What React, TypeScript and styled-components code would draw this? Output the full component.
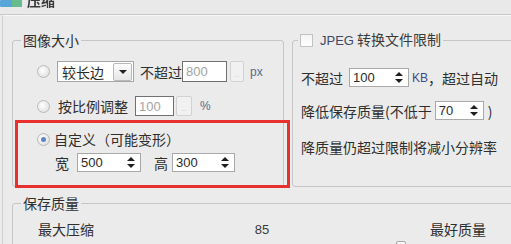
import React from "react";
import styled, { createGlobalStyle } from "styled-components";

const Global = createGlobalStyle`
  html, body { margin: 0; padding: 0; background: #ebebeb; overflow: hidden; }
  body { font-family: "Noto Sans CJK SC", "Liberation Sans", sans-serif; color: #2e2e2e; }
  * { box-sizing: border-box; }
`;

const Window = styled.div`
  width: 511px;
  height: 244px;
  overflow: hidden;
  background: #ebebeb;
`;

const TitleBar = styled.div`
  height: 15px;
  display: flex;
  align-items: flex-start;
  gap: 5px;
  border-bottom: 1px solid #c9c9c9;
  overflow: hidden;
  background: #e9e9e9;
`;

const TitleText = styled.span`
  font-size: 14px;
  line-height: 14px;
  margin-top: -7px;
  color: #3a3a3a;
  font-weight: bold;
  filter: blur(0.6px);
`;

const Panel = styled.div`
  margin-left: 2px;
  border-left: 1px solid #d0d0d0;
  border-top: 1px solid #f7f7f7;
  padding: 16px 0 0 9px;
  height: 229px;
`;

const TopRow = styled.div`
  display: flex;
  gap: 8px;
  width: 520px;
`;

const Group = styled.fieldset<{ $w: number; $h?: number }>`
  margin: 0;
  padding: 0;
  width: ${(p) => p.$w}px;
  height: ${(p) => (p.$h ? `${p.$h}px` : "auto")};
  border: 1px solid #c6c6c6;
  border-radius: 3px;
  min-inline-size: 0;
  flex-shrink: 0;
`;

const Legend = styled.legend<{ $ml: number }>`
  margin-left: ${(p) => p.$ml}px;
  padding: 0 2px;
  font-size: 14px;
  line-height: 16px;
  height: 16px;
  display: flex;
  align-items: center;
  gap: 8px;
  color: #2e2e2e;
`;

const LeftBody = styled.div`
  padding-top: 13px;
  display: flex;
  flex-direction: column;
`;

const Row = styled.div<{ $gap?: number; $mt?: number; $pl?: number }>`
  display: flex;
  align-items: center;
  gap: ${(p) => p.$gap ?? 0}px;
  margin-top: ${(p) => p.$mt ?? 0}px;
  padding-left: ${(p) => p.$pl ?? 0}px;
  white-space: nowrap;
`;

const Label = styled.span<{ $ml?: number; $mr?: number; $c?: string }>`
  font-size: 14px;
  line-height: 16px;
  margin-left: ${(p) => p.$ml ?? 0}px;
  margin-right: ${(p) => p.$mr ?? 0}px;
  color: ${(p) => p.$c ?? "#2e2e2e"};
`;

const Unit = styled.span<{ $ml?: number; $c?: string }>`
  font-family: "Liberation Sans", sans-serif;
  font-size: 12px;
  margin-left: ${(p) => p.$ml ?? 0}px;
  color: ${(p) => p.$c ?? "#5a6a8a"};
`;

const Radio = styled.span<{ $on?: boolean }>`
  width: 13px;
  height: 13px;
  border-radius: 50%;
  border: 1px solid #b9b9b9;
  background: radial-gradient(circle at 40% 40%, #ffffff 0%, #e4e4e4 70%);
  display: flex;
  align-items: center;
  justify-content: center;
  flex-shrink: 0;
  &::after {
    content: "";
    width: 5px;
    height: 5px;
    border-radius: 50%;
    background: ${(p) => (p.$on ? "#5b86c6" : "transparent")};
  }
`;

const Check = styled.span`
  width: 13px;
  height: 13px;
  border: 1px solid #c2c2c2;
  background: linear-gradient(#f4f4f4, #ffffff);
  flex-shrink: 0;
`;

const Select = styled.div`
  width: 77px;
  height: 21px;
  border: 1px solid #a6a6a6;
  background: #fff;
  display: flex;
  align-items: center;
  justify-content: space-between;
  padding: 0 1px 0 4px;
  font-size: 14px;
  line-height: 16px;
  color: #2a2a2a;
`;

const SelectBtn = styled.span`
  width: 19px;
  height: 18px;
  border: 1px solid #b9b9b9;
  border-radius: 2px;
  background: linear-gradient(#fdfdfd, #e6e6e6);
  display: flex;
  align-items: center;
  justify-content: center;
  &::after {
    content: "";
    border-left: 4px solid transparent;
    border-right: 4px solid transparent;
    border-top: 4px solid #222;
  }
`;

const Field = styled.div<{ $w: number; $h?: number; $off?: boolean }>`
  width: ${(p) => p.$w}px;
  height: ${(p) => p.$h ?? 19}px;
  background: #fff;
  border: 1px solid ${(p) => (p.$off ? "#707070" : "#a9a9a9")};
  display: flex;
  align-items: center;
  justify-content: space-between;
  padding: 0 5px 0 3px;
  font-family: "Liberation Sans", sans-serif;
  font-size: 13px;
  color: ${(p) => (p.$off ? "#a3a3a3" : "#2a2a2a")};
`;

const Arrows = styled.span`
  display: flex;
  flex-direction: column;
  gap: 3px;
  &::before,
  &::after {
    content: "";
    border-left: 4px solid transparent;
    border-right: 4px solid transparent;
  }
  &::before { border-bottom: 4px solid #1e1e1e; }
  &::after { border-top: 4px solid #1e1e1e; }
`;

const DimSpin = styled.span<{ $w: number; $h: number }>`
  width: ${(p) => p.$w}px;
  height: ${(p) => p.$h}px;
  border: 1px solid #d2d2d2;
  border-radius: 2px;
  background: #f1f1f1;
  display: flex;
  align-items: flex-end;
  justify-content: center;
  font-size: 8px;
  line-height: 12px;
  color: #c4c4c4;
  font-family: "Liberation Sans", sans-serif;
`;

const Highlight = styled.div`
  margin-top: 4px;
  margin-left: 2px;
  width: 275px;
  height: 68px;
  border: 3px solid #e8302e;
  padding: 8px 0 0 19px;
  position: relative;
  z-index: 1;
`;

const RightBody = styled.div`
  padding: 20px 0 0 8px;
  display: flex;
  flex-direction: column;
`;

const BottomGroupWrap = styled.div`
  margin-top: 8px;
  width: 510px;
`;

const ScaleRow = styled.div`
  margin: 10px 0 0 25px;
  width: 448px;
  display: flex;
  justify-content: space-between;
  align-items: center;
`;

const Track = styled.div`
  margin: 4px 0 0 17px;
  width: 436px;
  height: 10px;
  position: relative;
`;

const Thumb = styled.span`
  position: absolute;
  top: 0;
  width: 10px;
  height: 10px;
  border: 1px solid #a8a8a8;
  border-radius: 2px;
  background: linear-gradient(#fafafa, #e0e0e0);
  transform: translateX(-5px);
`;

function SpinField({ w, value }: { w: number; value: string }) {
  return (
    <Field $w={w}>
      <span>{value}</span>
      <Arrows />
    </Field>
  );
}

const AppIcon = () => (
  <svg width="22" height="8" viewBox="0 0 22 8" style={{ flexShrink: 0 }}>
    <rect x="0" y="0" width="22" height="7" rx="1" fill="#58a6d8" />
    <rect x="12" y="0" width="10" height="7" fill="#6cc27a" opacity="0.8" />
  </svg>
);

export default function App() {
  const quality = 85;
  return (
    <Window>
      <Global />
      <TitleBar>
        <AppIcon />
        <TitleText>压缩</TitleText>
      </TitleBar>
      <Panel>
        <TopRow>
          <Group $w={272} $h={155}>
            <Legend $ml={8}>图像大小</Legend>
            <LeftBody>
              <Row $pl={24}>
                <Radio />
                <Select style={{ marginLeft: 7 }}>
                  <span>较长边</span>
                  <SelectBtn />
                </Select>
                <Label $ml={6}>不超过</Label>
                <Field $w={45} $h={21} $off>
                  <span>800</span>
                </Field>
                <DimSpin $w={14} $h={21} style={{ marginLeft: 3 }}>..</DimSpin>
                <Unit $ml={6}>px</Unit>
              </Row>
              <Row $pl={24} $mt={14}>
                <Radio />
                <Label $ml={8}>按比例调整</Label>
                <Field $w={39} $h={20} $off style={{ marginLeft: 7 }}>
                  <span>100</span>
                </Field>
                <DimSpin $w={16} $h={20} style={{ marginLeft: 2 }}>..</DimSpin>
                <Unit $ml={8}>%</Unit>
              </Row>
              <Highlight>
                <Row>
                  <Radio $on />
                  <Label $ml={4}>自定义（可能变形）</Label>
                </Row>
                <Row $mt={6} $pl={18}>
                  <Label>宽</Label>
                  <Field $w={64} style={{ marginLeft: 8 }}>
                    <span>500</span>
                    <Arrows />
                  </Field>
                  <Label $ml={13} $mr={4}>高</Label>
                  <SpinField w={63} value="300" />
                </Row>
              </Highlight>
            </LeftBody>
          </Group>
          <Group $w={240} $h={155}>
            <Legend $ml={5}>
              <Check />
              <Label $c="#3a3a3a" style={{ marginLeft: -1 }}>
                <Unit $c="#3d4a66" style={{ fontSize: 13 }}>JPEG</Unit> 转换文件限制
              </Label>
            </Legend>
            <RightBody>
              <Row>
                <Label $mr={6}>不超过</Label>
                <SpinField w={60} value="100" />
                <Unit $ml={3} $c="#3d4a8a" style={{ fontSize: 12 }}>KB</Unit>
                <Label>，超过自动</Label>
              </Row>
              <Row $mt={14}>
                <Label $mr={3}>降低保存质量(不低于</Label>
                <SpinField w={49} value="70" />
                <Label $ml={4}>)</Label>
              </Row>
              <Row $mt={19}>
                <Label>降质量仍超过限制将减小分辨率</Label>
              </Row>
            </RightBody>
          </Group>
        </TopRow>
        <BottomGroupWrap>
          <Group $w={510}>
            <Legend $ml={8}>保存质量</Legend>
            <ScaleRow>
              <Label>最大压缩</Label>
              <Unit $c="#3a3a3a" style={{ fontSize: 13 }}>{quality}</Unit>
              <Label>最好质量</Label>
            </ScaleRow>
            <Track>
              <Thumb style={{ left: `${quality}%` }} />
            </Track>
          </Group>
        </BottomGroupWrap>
      </Panel>
    </Window>
  );
}
